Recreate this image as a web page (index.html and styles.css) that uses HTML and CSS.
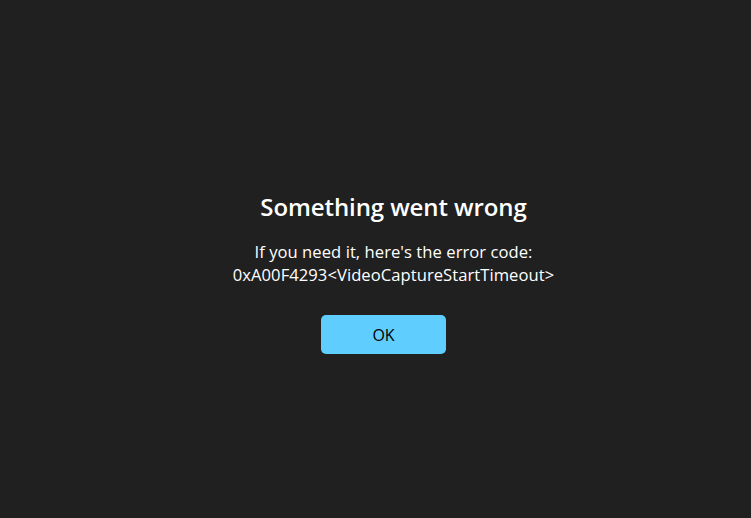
FILE: index.html
```html
<!DOCTYPE html>
<html>
<head>
<meta charset="utf-8">
<link rel="stylesheet" href="styles.css">
</head>
<body>
<main class="dialog">
  <h1 class="title">Something went wrong</h1>
  <p class="message">If you need it, here's the error code:<br>0xA00F4293&lt;VideoCaptureStartTimeout&gt;</p>
  <button class="ok">OK</button>
</main>
</body>
</html>
```
FILE: styles.css
```css
html, body {
  margin: 0;
  height: 100%;
  background: #202020;
}
body {
  font-family: "Open Sans", "Noto Sans", sans-serif;
  color: #ffffff;
}
.dialog {
  display: flex;
  flex-direction: column;
  align-items: center;
  padding-top: 191px;
  padding-left: 16px;
}
.title {
  margin: 0;
  padding-left: 20px;
  font-size: 24px;
  font-weight: 600;
  line-height: 32px;
  letter-spacing: -0.1px;
}
.message {
  margin: 17px 0 0;
  padding-left: 20px;
  font-size: 16.6px;
  line-height: 23px;
  text-align: center;
  letter-spacing: 0.05px;
}
.ok {
  margin-top: 29px;
  width: 125px;
  height: 39px;
  border: none;
  border-radius: 5px;
  background: #60cdff;
  color: #000000;
  font-family: "Open Sans", "Noto Sans", sans-serif;
  font-size: 16px;
  padding: 0;
}
```
